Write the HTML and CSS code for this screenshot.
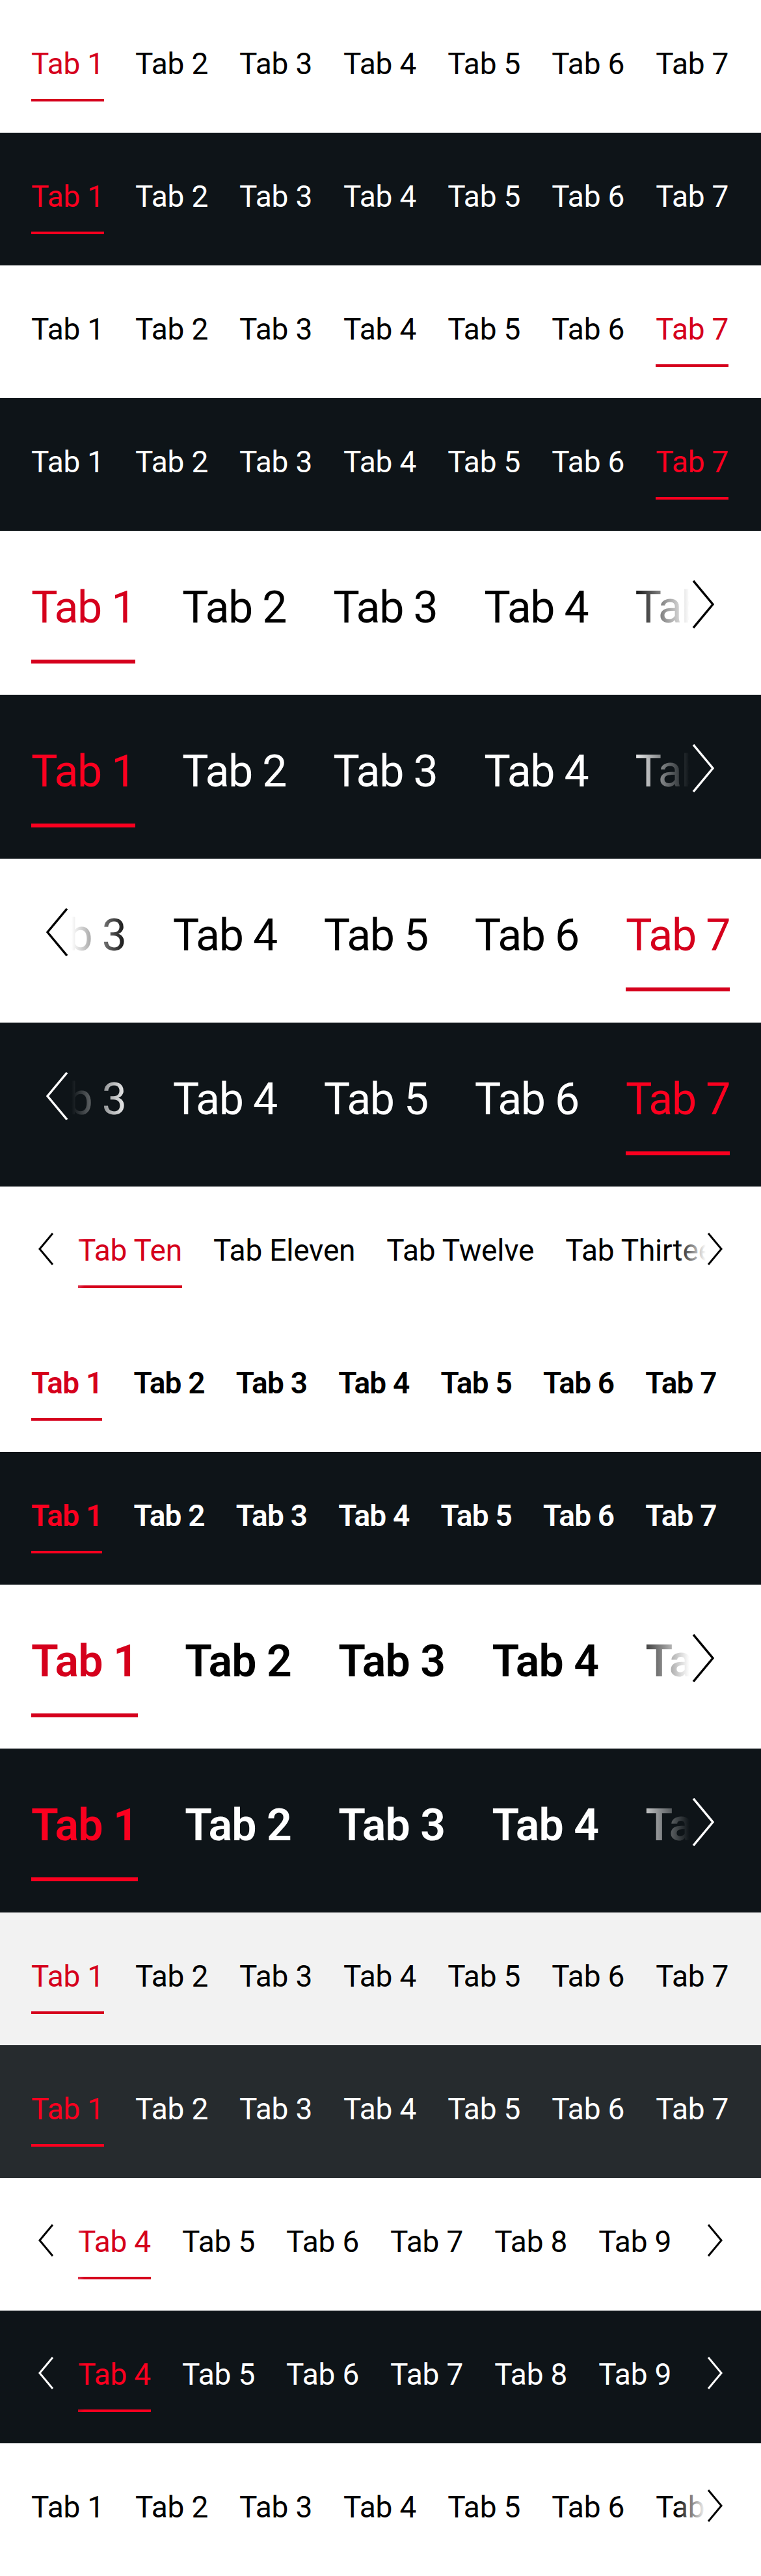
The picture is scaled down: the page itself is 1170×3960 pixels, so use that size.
FILE: index.html
```html
<!DOCTYPE html>
<html lang="en">
<head>
<meta charset="utf-8">
<title>Tabs Bar</title>
<link rel="stylesheet" href="styles.css">
</head>
<body>

<section class="stage light">
  <div class="bar"><div class="tabs">
    <span class="tab active">Tab 1</span><span class="tab">Tab 2</span><span class="tab">Tab 3</span><span class="tab">Tab 4</span><span class="tab">Tab 5</span><span class="tab">Tab 6</span><span class="tab">Tab 7</span>
  </div></div>
</section>

<section class="stage dark">
  <div class="bar"><div class="tabs">
    <span class="tab active">Tab 1</span><span class="tab">Tab 2</span><span class="tab">Tab 3</span><span class="tab">Tab 4</span><span class="tab">Tab 5</span><span class="tab">Tab 6</span><span class="tab">Tab 7</span>
  </div></div>
</section>

<section class="stage light">
  <div class="bar"><div class="tabs">
    <span class="tab">Tab 1</span><span class="tab">Tab 2</span><span class="tab">Tab 3</span><span class="tab">Tab 4</span><span class="tab">Tab 5</span><span class="tab">Tab 6</span><span class="tab active">Tab 7</span>
  </div></div>
</section>

<section class="stage dark">
  <div class="bar"><div class="tabs">
    <span class="tab">Tab 1</span><span class="tab">Tab 2</span><span class="tab">Tab 3</span><span class="tab">Tab 4</span><span class="tab">Tab 5</span><span class="tab">Tab 6</span><span class="tab active">Tab 7</span>
  </div></div>
</section>

<section class="stage light lg">
  <div class="bar"><div class="tabs">
    <span class="tab active">Tab 1</span><span class="tab">Tab 2</span><span class="tab">Tab 3</span><span class="tab">Tab 4</span><span class="tab">Tab 5</span><span class="tab">Tab 6</span><span class="tab">Tab 7</span>
  </div>
  <div class="arrow arrow-r"><svg class="chev" viewBox="0 0 34 74" width="34" height="74"><polyline points="2,1 32,37 2,73"/></svg></div>
  </div>
</section>

<section class="stage dark lg">
  <div class="bar"><div class="tabs">
    <span class="tab active">Tab 1</span><span class="tab">Tab 2</span><span class="tab">Tab 3</span><span class="tab">Tab 4</span><span class="tab">Tab 5</span><span class="tab">Tab 6</span><span class="tab">Tab 7</span>
  </div>
  <div class="arrow arrow-r"><svg class="chev" viewBox="0 0 34 74" width="34" height="74"><polyline points="2,1 32,37 2,73"/></svg></div>
  </div>
</section>

<section class="stage light lg">
  <div class="bar"><div class="tabs end">
    <span class="tab">Tab 1</span><span class="tab">Tab 2</span><span class="tab">Tab 3</span><span class="tab">Tab 4</span><span class="tab">Tab 5</span><span class="tab">Tab 6</span><span class="tab active">Tab 7</span>
  </div>
  <div class="arrow arrow-l"><svg class="chev" viewBox="0 0 34 74" width="34" height="74"><polyline points="32,1 2,37 32,73"/></svg></div>
  </div>
</section>

<section class="stage dark lg">
  <div class="bar"><div class="tabs end">
    <span class="tab">Tab 1</span><span class="tab">Tab 2</span><span class="tab">Tab 3</span><span class="tab">Tab 4</span><span class="tab">Tab 5</span><span class="tab">Tab 6</span><span class="tab active">Tab 7</span>
  </div>
  <div class="arrow arrow-l"><svg class="chev" viewBox="0 0 34 74" width="34" height="74"><polyline points="32,1 2,37 32,73"/></svg></div>
  </div>
</section>

<section class="stage light">
  <div class="bar"><div class="tabs offset">
    <span class="tab active">Tab Ten</span><span class="tab">Tab Eleven</span><span class="tab">Tab Twelve</span><span class="tab">Tab Thirteen</span><span class="tab">Tab Fourteen</span>
  </div>
  <div class="arrow arrow-l"><svg class="chev" viewBox="0 0 24 50" width="24" height="50"><polyline points="22,1 2,25 22,49"/></svg></div>
  <div class="arrow arrow-r"><svg class="chev" viewBox="0 0 24 50" width="24" height="50"><polyline points="2,1 22,25 2,49"/></svg></div>
  </div>
</section>

<section class="stage light bold">
  <div class="bar"><div class="tabs">
    <span class="tab active">Tab 1</span><span class="tab">Tab 2</span><span class="tab">Tab 3</span><span class="tab">Tab 4</span><span class="tab">Tab 5</span><span class="tab">Tab 6</span><span class="tab">Tab 7</span>
  </div></div>
</section>

<section class="stage dark bold">
  <div class="bar"><div class="tabs">
    <span class="tab active">Tab 1</span><span class="tab">Tab 2</span><span class="tab">Tab 3</span><span class="tab">Tab 4</span><span class="tab">Tab 5</span><span class="tab">Tab 6</span><span class="tab">Tab 7</span>
  </div></div>
</section>

<section class="stage light lg bold">
  <div class="bar"><div class="tabs">
    <span class="tab active">Tab 1</span><span class="tab">Tab 2</span><span class="tab">Tab 3</span><span class="tab">Tab 4</span><span class="tab">Tab 5</span><span class="tab">Tab 6</span><span class="tab">Tab 7</span>
  </div>
  <div class="arrow arrow-r"><svg class="chev" viewBox="0 0 34 74" width="34" height="74"><polyline points="2,1 32,37 2,73"/></svg></div>
  </div>
</section>

<section class="stage dark lg bold">
  <div class="bar"><div class="tabs">
    <span class="tab active">Tab 1</span><span class="tab">Tab 2</span><span class="tab">Tab 3</span><span class="tab">Tab 4</span><span class="tab">Tab 5</span><span class="tab">Tab 6</span><span class="tab">Tab 7</span>
  </div>
  <div class="arrow arrow-r"><svg class="chev" viewBox="0 0 34 74" width="34" height="74"><polyline points="2,1 32,37 2,73"/></svg></div>
  </div>
</section>

<section class="stage grey">
  <div class="bar"><div class="tabs">
    <span class="tab active">Tab 1</span><span class="tab">Tab 2</span><span class="tab">Tab 3</span><span class="tab">Tab 4</span><span class="tab">Tab 5</span><span class="tab">Tab 6</span><span class="tab">Tab 7</span>
  </div></div>
</section>

<section class="stage darkgrey">
  <div class="bar"><div class="tabs">
    <span class="tab active">Tab 1</span><span class="tab">Tab 2</span><span class="tab">Tab 3</span><span class="tab">Tab 4</span><span class="tab">Tab 5</span><span class="tab">Tab 6</span><span class="tab">Tab 7</span>
  </div></div>
</section>

<section class="stage light">
  <div class="bar"><div class="tabs offset">
    <span class="tab active">Tab 4</span><span class="tab">Tab 5</span><span class="tab">Tab 6</span><span class="tab">Tab 7</span><span class="tab">Tab 8</span><span class="tab">Tab 9</span>
  </div>
  <div class="arrow arrow-l"><svg class="chev" viewBox="0 0 24 50" width="24" height="50"><polyline points="22,1 2,25 22,49"/></svg></div>
  <div class="arrow arrow-r"><svg class="chev" viewBox="0 0 24 50" width="24" height="50"><polyline points="2,1 22,25 2,49"/></svg></div>
  </div>
</section>

<section class="stage dark">
  <div class="bar"><div class="tabs offset">
    <span class="tab active">Tab 4</span><span class="tab">Tab 5</span><span class="tab">Tab 6</span><span class="tab">Tab 7</span><span class="tab">Tab 8</span><span class="tab">Tab 9</span>
  </div>
  <div class="arrow arrow-l"><svg class="chev" viewBox="0 0 24 50" width="24" height="50"><polyline points="22,1 2,25 22,49"/></svg></div>
  <div class="arrow arrow-r"><svg class="chev" viewBox="0 0 24 50" width="24" height="50"><polyline points="2,1 22,25 2,49"/></svg></div>
  </div>
</section>

<section class="stage light">
  <div class="bar"><div class="tabs">
    <span class="tab">Tab 1</span><span class="tab">Tab 2</span><span class="tab">Tab 3</span><span class="tab">Tab 4</span><span class="tab">Tab 5</span><span class="tab">Tab 6</span><span class="tab">Tab 7</span>
  </div>
  <div class="arrow arrow-r"><svg class="chev" viewBox="0 0 24 50" width="24" height="50"><polyline points="2,1 22,25 2,49"/></svg></div>
  </div>
</section>

</body>
</html>
```

FILE: styles.css
```css
html, body {
  margin: 0;
  padding: 0;
}

body {
  width: 1170px;
  font-family: Roboto, "Liberation Sans", Arial, sans-serif;
  -webkit-font-smoothing: antialiased;
}

.stage {
  box-sizing: border-box;
  height: 204px;
  padding: 62px 48px 48px;
  background: var(--bg);
  color: var(--fg);
}

.stage.lg {
  height: 252px;
  padding-top: 64px;
}

.light {
  --bg: #ffffff;
  --bg0: rgba(255, 255, 255, 0);
  --fg: #000000;
  --act: #d5001c;
}

.dark {
  --bg: #0e1418;
  --bg0: rgba(14, 20, 24, 0);
  --fg: #ffffff;
  --act: #fb001f;
}

.grey {
  --bg: #f2f2f2;
  --bg0: rgba(242, 242, 242, 0);
  --fg: #000000;
  --act: #d5001c;
}

.darkgrey {
  --bg: #262b2e;
  --bg0: rgba(38, 43, 46, 0);
  --fg: #ffffff;
  --act: #fb001f;
}

.bar {
  position: relative;
}

.tabs {
  display: flex;
  gap: 48px;
  overflow: hidden;
}

.tabs.end {
  justify-content: flex-end;
}

.tabs.offset {
  padding-left: 72px;
}

.tab {
  flex: none;
  white-space: nowrap;
  font-size: 46px;
  line-height: 72px;
  letter-spacing: -0.2px;
  font-weight: 400;
  padding-bottom: 18px;
  border-bottom: 4px solid transparent;
}

.tab.active {
  color: var(--act);
  border-bottom-color: var(--act);
}

.lg .tabs {
  gap: 72px;
}

.lg .tab {
  font-size: 68px;
  line-height: 108px;
  letter-spacing: -1.4px;
  padding-bottom: 26px;
  border-bottom-width: 6px;
}

.bold .tab {
  font-weight: 600;
  letter-spacing: -0.8px;
  padding-bottom: 18px;
  border-bottom-width: 4px;
}

.lg.bold .tab {
  letter-spacing: -0.7px;
  padding-bottom: 26px;
  border-bottom-width: 6px;
}

/* scroll indicators */
.arrow {
  position: absolute;
  top: 0;
  bottom: 0;
  display: flex;
  align-items: flex-start;
  box-sizing: border-box;
  width: 82px;
}

.arrow-r {
  right: 0;
  justify-content: flex-end;
  padding-right: 11px;
  background: linear-gradient(to right, var(--bg0) 0, var(--bg) 45px);
}

.arrow-l {
  left: 0;
  justify-content: flex-start;
  padding-left: 11px;
  background: linear-gradient(to left, var(--bg0) 0, var(--bg) 45px);
}

.chev {
  display: block;
  margin-top: 9px;
  fill: none;
  stroke: var(--fg);
  stroke-width: 3;
  stroke-linecap: butt;
  stroke-linejoin: miter;
}

.lg .arrow {
  width: 152px;
}

.lg .arrow-r {
  padding-right: 24px;
  background: linear-gradient(to right, var(--bg0) 0, var(--bg) 90px);
}

.lg .arrow-l {
  padding-left: 23px;
  background: linear-gradient(to left, var(--bg0) 0, var(--bg) 90px);
}

.lg .chev {
  margin-top: 12px;
  stroke-width: 3.5;
}
```
